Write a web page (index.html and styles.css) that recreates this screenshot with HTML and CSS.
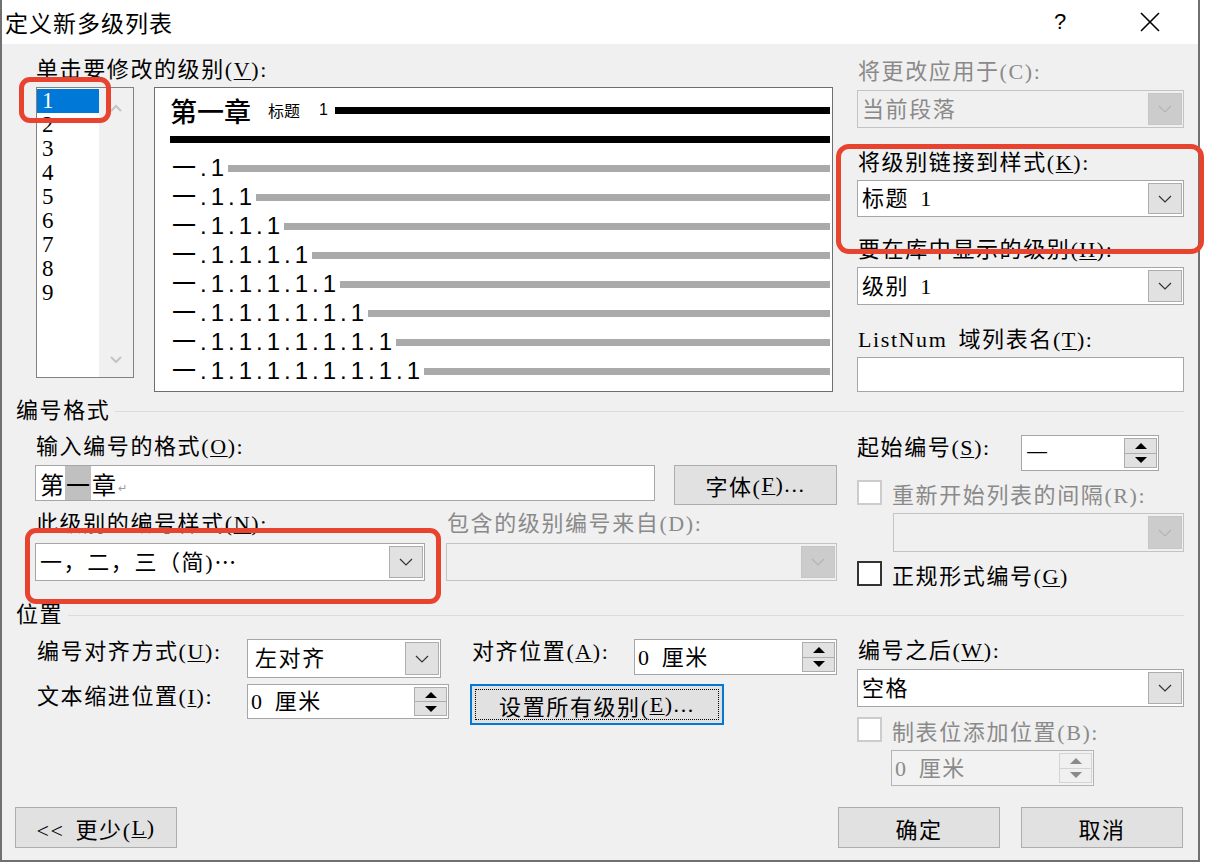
FILE: index.html
```html
<!DOCTYPE html>
<html>
<head>
<meta charset="utf-8">
<title>定义新多级列表</title>
<link rel="stylesheet" href="styles.css">
</head>
<body>
<div class="screen">
<div class="dialog">
    <div class="titlebar">
        <span class="title">定义新多级列表</span>
        <span class="help">?</span>
        <span class="close">
            <svg width="20" height="20" viewBox="0 0 20 20"><path d="M1 1 L19 19 M19 1 L1 19" stroke="#000" stroke-width="1.6"/></svg>
        </span>
    </div>

    <div class="content">
        <!-- levels + preview -->
        <div class="cols">
            <div>
                <div class="label">单击要修改的级别(<u>V</u>):</div>
                <div class="level-row">
                    <div class="levels">
                        <div class="level-items">
                            <div class="item selected">1</div>
                            <div class="item">2</div>
                            <div class="item">3</div>
                            <div class="item">4</div>
                            <div class="item">5</div>
                            <div class="item">6</div>
                            <div class="item">7</div>
                            <div class="item">8</div>
                            <div class="item">9</div>
                        </div>
                        <div class="vscroll">
                            <svg width="12" height="8" viewBox="0 0 12 8"><path d="M1 7 L6 2 L11 7" class="sc"/></svg>
                            <svg width="12" height="8" viewBox="0 0 12 8"><path d="M1 1 L6 6 L11 1" class="sc"/></svg>
                        </div>
                    </div>
                    <div class="preview">
                        <div class="pv-head">
                            <span class="pv-chapter">第一章</span>
                            <span class="pv-style">标题</span>
                            <span class="pv-one">1</span>
                            <span class="bar black"></span>
                        </div>
                        <div class="bar black wide"></div>
                        <div class="pv-row first"><span class="pv-num">一.1</span><span class="bar gray"></span></div>
                        <div class="pv-row"><span class="pv-num">一.1.1</span><span class="bar gray"></span></div>
                        <div class="pv-row"><span class="pv-num">一.1.1.1</span><span class="bar gray"></span></div>
                        <div class="pv-row"><span class="pv-num">一.1.1.1.1</span><span class="bar gray"></span></div>
                        <div class="pv-row"><span class="pv-num">一.1.1.1.1.1</span><span class="bar gray"></span></div>
                        <div class="pv-row"><span class="pv-num">一.1.1.1.1.1.1</span><span class="bar gray"></span></div>
                        <div class="pv-row"><span class="pv-num">一.1.1.1.1.1.1.1</span><span class="bar gray"></span></div>
                        <div class="pv-row"><span class="pv-num">一.1.1.1.1.1.1.1.1</span><span class="bar gray"></span></div>
                    </div>
                </div>
            </div>

            <div class="side">
                <div class="label disabled apply-label">将更改应用于(C):</div>
                <div class="combo disabled mt6"><span class="val">当前段落</span>
                    <span class="drop"><svg class="chev" width="14" height="8" viewBox="0 0 14 8"><path d="M1 1 L7 7 L13 1"/></svg></span>
                </div>
                <div class="label mt23">将级别链接到样式(<u>K</u>):</div>
                <div class="combo short mt5"><span class="val">标题 1</span>
                    <span class="drop"><svg class="chev" width="14" height="8" viewBox="0 0 14 8"><path d="M1 1 L7 7 L13 1"/></svg></span>
                </div>
                <div class="label mt21">要在库中显示的级别(<u>H</u>):</div>
                <div class="combo mt5"><span class="val">级别 1</span>
                    <span class="drop"><svg class="chev" width="14" height="8" viewBox="0 0 14 8"><path d="M1 1 L7 7 L13 1"/></svg></span>
                </div>
                <div class="label mt23">ListNum 域列表名(<u>T</u>):</div>
                <div class="textbox mt5"></div>
            </div>
        </div>

        <!-- number format -->
        <div class="group first-group"><span>编号格式</span><span class="group-line"></span></div>
        <div class="cols section">
            <div>
                <div class="label">输入编号的格式(<u>O</u>):</div>
                <div class="format-row">
                    <div class="format-input">
                        <span class="ch">第</span><span class="ch hl">一</span><span class="ch">章</span><span class="ret">↵</span>
                    </div>
                    <div class="btn font-btn">字体(<u>F</u>)...</div>
                </div>
                <div class="two">
                    <div>
                        <div class="label">此级别的编号样式(<u>N</u>):</div>
                        <div class="combo mt7"><span class="val">一，二，三（简)<span class="cjk">…</span></span>
                            <span class="drop"><svg class="chev" width="14" height="8" viewBox="0 0 14 8"><path d="M1 1 L7 7 L13 1"/></svg></span>
                        </div>
                    </div>
                    <div>
                        <div class="label disabled">包含的级别编号来自(D):</div>
                        <div class="combo disabled mt7">
                            <span class="drop"><svg class="chev" width="14" height="8" viewBox="0 0 14 8"><path d="M1 1 L7 7 L13 1"/></svg></span>
                        </div>
                    </div>
                </div>
            </div>

            <div class="side">
                <div class="start-row">
                    <span class="start-label">起始编号(<u>S</u>):</span>
                    <div class="spin start-spin"><span class="val cjk thin">一</span>
                        <span class="arrows">
                            <span class="arrow"><svg width="12" height="6" viewBox="0 0 12 6"><path d="M6 0 L12 6 L0 6Z"/></svg></span>
                            <span class="arrow"><svg width="12" height="6" viewBox="0 0 12 6"><path d="M0 0 L12 0 L6 6Z"/></svg></span>
                        </span>
                    </div>
                </div>
                <div class="check-row mt9">
                    <span class="check off"></span>
                    <span class="disabled">重新开始列表的间隔(R):</span>
                </div>
                <div class="combo disabled indent mt8">
                    <span class="drop"><svg class="chev" width="14" height="8" viewBox="0 0 14 8"><path d="M1 1 L7 7 L13 1"/></svg></span>
                </div>
                <div class="check-row mt9">
                    <span class="check"></span>
                    <span>正规形式编号(<u>G</u>)</span>
                </div>
            </div>
        </div>

        <!-- position -->
        <div class="group pos-group"><span>位置</span><span class="group-line"></span></div>
        <div class="cols section">
            <div class="pos">
                <div class="pos-label r1 c1">编号对齐方式(<u>U</u>):</div>
                <div class="combo align-combo r1 c2"><span class="val">左对齐</span>
                    <span class="drop"><svg class="chev" width="14" height="8" viewBox="0 0 14 8"><path d="M1 1 L7 7 L13 1"/></svg></span>
                </div>
                <div class="pos-label r1 c4">对齐位置(<u>A</u>):</div>
                <div class="spin r1 c5"><span class="val">0 厘米</span>
                    <span class="arrows">
                        <span class="arrow"><svg width="12" height="6" viewBox="0 0 12 6"><path d="M6 0 L12 6 L0 6Z"/></svg></span>
                        <span class="arrow"><svg width="12" height="6" viewBox="0 0 12 6"><path d="M0 0 L12 0 L6 6Z"/></svg></span>
                    </span>
                </div>
                <div class="pos-label r2 c1">文本缩进位置(<u>I</u>):</div>
                <div class="spin indent-spin r2 c2"><span class="val">0 厘米</span>
                    <span class="arrows">
                        <span class="arrow"><svg width="12" height="6" viewBox="0 0 12 6"><path d="M6 0 L12 6 L0 6Z"/></svg></span>
                        <span class="arrow"><svg width="12" height="6" viewBox="0 0 12 6"><path d="M0 0 L12 0 L6 6Z"/></svg></span>
                    </span>
                </div>
                <div class="btn focus all-btn r2">
                    <span class="focus-ring">设置所有级别(<u>E</u>)...</span>
                </div>
            </div>

            <div class="side">
                <div class="label">编号之后(<u>W</u>):</div>
                <div class="combo mt6"><span class="val">空格</span>
                    <span class="drop"><svg class="chev" width="14" height="8" viewBox="0 0 14 8"><path d="M1 1 L7 7 L13 1"/></svg></span>
                </div>
                <div class="check-row mt10">
                    <span class="check off"></span>
                    <span class="disabled">制表位添加位置(B):</span>
                </div>
                <div class="spin disabled tab-spin mt8"><span class="val">0 厘米</span>
                    <span class="arrows">
                        <span class="arrow"><svg width="12" height="6" viewBox="0 0 12 6"><path d="M6 0 L12 6 L0 6Z"/></svg></span>
                        <span class="arrow"><svg width="12" height="6" viewBox="0 0 12 6"><path d="M0 0 L12 0 L6 6Z"/></svg></span>
                    </span>
                </div>
            </div>
        </div>

        <div class="footer">
            <div class="btn">&lt;&lt; 更少(<u>L</u>)</div>
            <div class="footer-right">
                <div class="btn">确定</div>
                <div class="btn">取消</div>
            </div>
        </div>
    </div>
</div>

<!-- red annotation frames -->
<div class="mark mark-level"></div>
<div class="mark mark-style"></div>
<div class="mark mark-numstyle"></div>
</div>
</body>
</html>
```

FILE: styles.css
```css
body
{
    margin: 0;
    background: #fff;
    font-family: "Liberation Serif", "Noto Sans CJK SC", serif;
    font-size: 22px;
    color: #000;
}
.screen
{
    position: relative;
    width: 1226px;
    height: 862px;
    overflow: hidden;
}
.dialog
{
    width: 1200px;
    height: 862px;
    box-sizing: border-box;
    border: 2px solid #707070;
    border-top: 0;
    background: #f0f0f0;
}

/* title bar */
.titlebar
{
    height: 44px;
    background: #fff;
    display: flex;
    align-items: center;
}
.title
{
    font-family: "Noto Sans CJK SC", sans-serif;
    font-size: 23px;
    letter-spacing: 1px;
    margin-left: 3px;
}
.help
{
    margin-left: auto;
    width: 14px;
    font-family: "Liberation Sans", sans-serif;
    font-size: 22px;
}
.close
{
    width: 20px;
    height: 20px;
    margin-left: 72px;
    margin-right: 38px;
}
.close svg
{
    display: block;
}

/* body */
.content
{
    padding: 14px 14px 0;
    letter-spacing: 1.6px;
    word-spacing: 4px;
}
.cols
{
    display: grid;
    grid-template-columns: 802px 327px;
    column-gap: 20px;
    margin-left: 19px;
    align-items: start;
}
.section
{
    margin-top: 12px;
}
.side
{
    display: flex;
    flex-direction: column;
}
.label
{
    height: 24px;
    line-height: 24px;
    white-space: nowrap;
    padding-left: 1px;
}
.disabled
{
    color: #8a8a8a;
}
.cjk
{
    font-family: "Noto Sans CJK SC", sans-serif;
}
.thin
{
    font-weight: 300;
}
u
{
    text-decoration-thickness: 1px;
    text-underline-offset: 2px;
}
.apply-label { margin-top: 2px; }
.mt5 { margin-top: 5px; }
.mt6 { margin-top: 6px; }
.mt7 { margin-top: 7px; }
.mt8 { margin-top: 8px; }
.mt9 { margin-top: 9px; }
.mt10 { margin-top: 10px; }
.mt21 { margin-top: 21px; }
.mt23 { margin-top: 23px; }

/* level list */
.level-row
{
    display: flex;
    margin-top: 5px;
}
.levels
{
    width: 98px;
    height: 291px;
    margin-left: 1px;
    box-sizing: border-box;
    border: 1px solid #828282;
    background: #fff;
    display: flex;
}
.level-items
{
    width: 62px;
    padding-top: 1px;
}
.item
{
    height: 24px;
    line-height: 24px;
    padding-left: 5px;
    font-size: 23px;
}
.item.selected
{
    background: #0078d7;
    color: #fff;
}
.vscroll
{
    flex: 1;
    background: #f0f0f0;
    display: flex;
    flex-direction: column;
    justify-content: space-between;
    align-items: center;
    padding: 16px 0 13px;
}
.sc
{
    fill: none;
    stroke: #c4c4c4;
    stroke-width: 2;
}

/* preview */
.preview
{
    width: 679px;
    height: 305px;
    margin-left: 20px;
    box-sizing: border-box;
    border: 1px solid #6e6e6e;
    background: #fff;
    padding: 0 2px 0 15px;
    letter-spacing: 0;
    word-spacing: 0;
}
.pv-head
{
    height: 44px;
    display: flex;
    align-items: center;
}
.pv-chapter
{
    font-family: "Noto Sans CJK SC", sans-serif;
    font-size: 27px;
    font-weight: 500;
}
.pv-style
{
    font-family: "Noto Sans CJK SC", sans-serif;
    font-size: 16px;
    margin-left: 17px;
}
.pv-one
{
    font-family: "Liberation Sans", sans-serif;
    font-size: 16px;
    margin-left: 19px;
}
.bar
{
    height: 7px;
    flex: 1;
}
.black
{
    background: #000;
}
.gray
{
    background: #aaa;
}
.pv-one + .bar
{
    margin-left: 7px;
}
.bar.wide
{
    margin-top: 4px;
}
.pv-row
{
    height: 29px;
    display: flex;
    align-items: center;
}
.pv-row.first
{
    margin-top: 11px;
}
.pv-num
{
    font-family: "Liberation Sans", "Noto Sans CJK SC", sans-serif;
    font-size: 24px;
    line-height: 29px;
    letter-spacing: 4px;
    padding-left: 2px;
    margin-top: -3px;
}

/* inputs */
.combo
{
    height: 38px;
    box-sizing: border-box;
    border: 1px solid #a6a6a6;
    background: #fff;
    display: flex;
    align-items: center;
    padding: 2px 1px 2px 4px;
    white-space: nowrap;
}
.val
{
    margin-top: -5px;
}
.combo.short
{
    height: 37px;
}
.combo.disabled
{
    background: #f0f0f0;
    border-color: #c3c3c3;
}
.drop
{
    margin-left: auto;
    width: 34px;
    align-self: stretch;
    box-sizing: border-box;
    border: 1px solid #adadad;
    background: #e1e1e1;
    display: flex;
    align-items: center;
    justify-content: center;
    color: #333;
}
.combo.disabled .drop
{
    background: #cccccc;
    border-color: #c6c6c6;
    color: #b4b4b4;
}
.chev path
{
    fill: none;
    stroke: currentColor;
    stroke-width: 1.2;
}
.textbox
{
    height: 35px;
    box-sizing: border-box;
    border: 1px solid #a6a6a6;
    background: #fff;
}
.spin
{
    height: 36px;
    box-sizing: border-box;
    border: 1px solid #a6a6a6;
    background: #fff;
    display: flex;
    align-items: center;
    padding: 2px 1px 2px 3px;
    white-space: nowrap;
}
.arrows
{
    margin-left: auto;
    width: 33px;
    align-self: stretch;
    display: flex;
    flex-direction: column;
}
.arrow
{
    flex: 1;
    box-sizing: border-box;
    border: 1px solid #adadad;
    background: #e1e1e1;
    display: flex;
    align-items: center;
    justify-content: center;
}
.arrow + .arrow
{
    border-top: 0;
}
.arrow svg
{
    fill: #000;
}
.spin.disabled
{
    background: #f2f2f2;
    border-color: #b4b4b4;
}
.spin.disabled .arrow
{
    background: #f0f0f0;
    border-color: #d4d4d4;
}
.spin.disabled .arrow svg
{
    fill: #8a8a8a;
}

/* group headings */
.group
{
    display: flex;
    align-items: center;
    height: 24px;
    line-height: 24px;
}
.first-group
{
    margin-top: 7px;
}
.pos-group
{
    margin-top: 17px;
}
.group-line
{
    flex: 1;
    height: 1px;
    background: #dcdcdc;
    margin-left: 5px;
}

/* number format */
.format-row
{
    display: flex;
    margin-top: 6px;
}
.format-input
{
    width: 620px;
    height: 36px;
    box-sizing: border-box;
    border: 1px solid #a6a6a6;
    background: #fff;
    display: flex;
    padding-left: 3px;
    font-family: "Noto Sans CJK SC", sans-serif;
    font-size: 24px;
    letter-spacing: 0;
}
.ch
{
    display: flex;
    align-items: center;
    padding: 0 1px;
}
.ch.hl
{
    background: #c0c0c0;
}
.ret
{
    font-size: 11px;
    color: #9a9a9a;
    align-self: center;
    margin-top: 8px;
    margin-left: 1px;
}
.btn
{
    height: 41px;
    box-sizing: border-box;
    border: 1px solid #adadad;
    background: #e1e1e1;
    display: flex;
    align-items: center;
    justify-content: center;
    white-space: nowrap;
}
.font-btn
{
    width: 163px;
    height: 40px;
    margin-left: 19px;
}
.two
{
    display: grid;
    grid-template-columns: 390px 391px;
    column-gap: 21px;
    margin-top: 7px;
}
.start-row
{
    display: flex;
    align-items: flex-start;
}
.start-label
{
    width: 164px;
    line-height: 26px;
    white-space: nowrap;
}
.start-spin
{
    width: 138px;
    padding-left: 4px;
}
.check-row
{
    display: flex;
    align-items: center;
    height: 25px;
    white-space: nowrap;
}
.check
{
    width: 25px;
    height: 25px;
    box-sizing: border-box;
    border: 2px solid #333;
    background: #fff;
    margin-right: 10px;
}
.check.off
{
    border-color: #cccccc;
}
.indent
{
    margin-left: 36px;
    height: 39px;
}

/* position */
.pos
{
    display: grid;
    grid-template-columns: 212px 202px 21px 164px 203px;
    grid-template-rows: 39px 41px;
    row-gap: 6px;
    align-items: start;
}
.pos-label
{
    line-height: 26px;
    white-space: nowrap;
    padding-left: 2px;
}
.r1 { grid-row: 1; }
.r2 { grid-row: 2; }
.c1 { grid-column: 1; }
.c2 { grid-column: 2; }
.c4 { grid-column: 4; }
.c5 { grid-column: 5; }
.align-combo
{
    width: 194px;
    height: 39px;
    padding-left: 7px;
}
.indent-spin
{
    height: 35px;
}
.all-btn
{
    grid-column: 4 / 6;
    width: 254px;
    border: 2px solid #0078d7;
    padding: 3px;
}
.focus-ring
{
    flex: 1;
    align-self: stretch;
    display: flex;
    align-items: center;
    justify-content: center;
    border: 1px dotted #000;
}
.tab-spin
{
    width: 203px;
    margin-left: 34px;
}

/* footer */
.footer
{
    display: flex;
    margin-top: 21px;
    margin-left: -1px;
    margin-right: 1px;
}
.footer .btn
{
    width: 162px;
}
.footer-right
{
    margin-left: auto;
    display: flex;
    gap: 21px;
}

/* red annotation frames */
.mark
{
    position: absolute;
    box-sizing: border-box;
    border: 5px solid #e8432e;
    border-radius: 11px;
}
.mark-level
{
    left: 19px;
    top: 77px;
    width: 92px;
    height: 46px;
}
.mark-style
{
    left: 836px;
    top: 144px;
    width: 368px;
    height: 110px;
    border-radius: 13px;
}
.mark-numstyle
{
    left: 25px;
    top: 528px;
    width: 416px;
    height: 76px;
}
```
